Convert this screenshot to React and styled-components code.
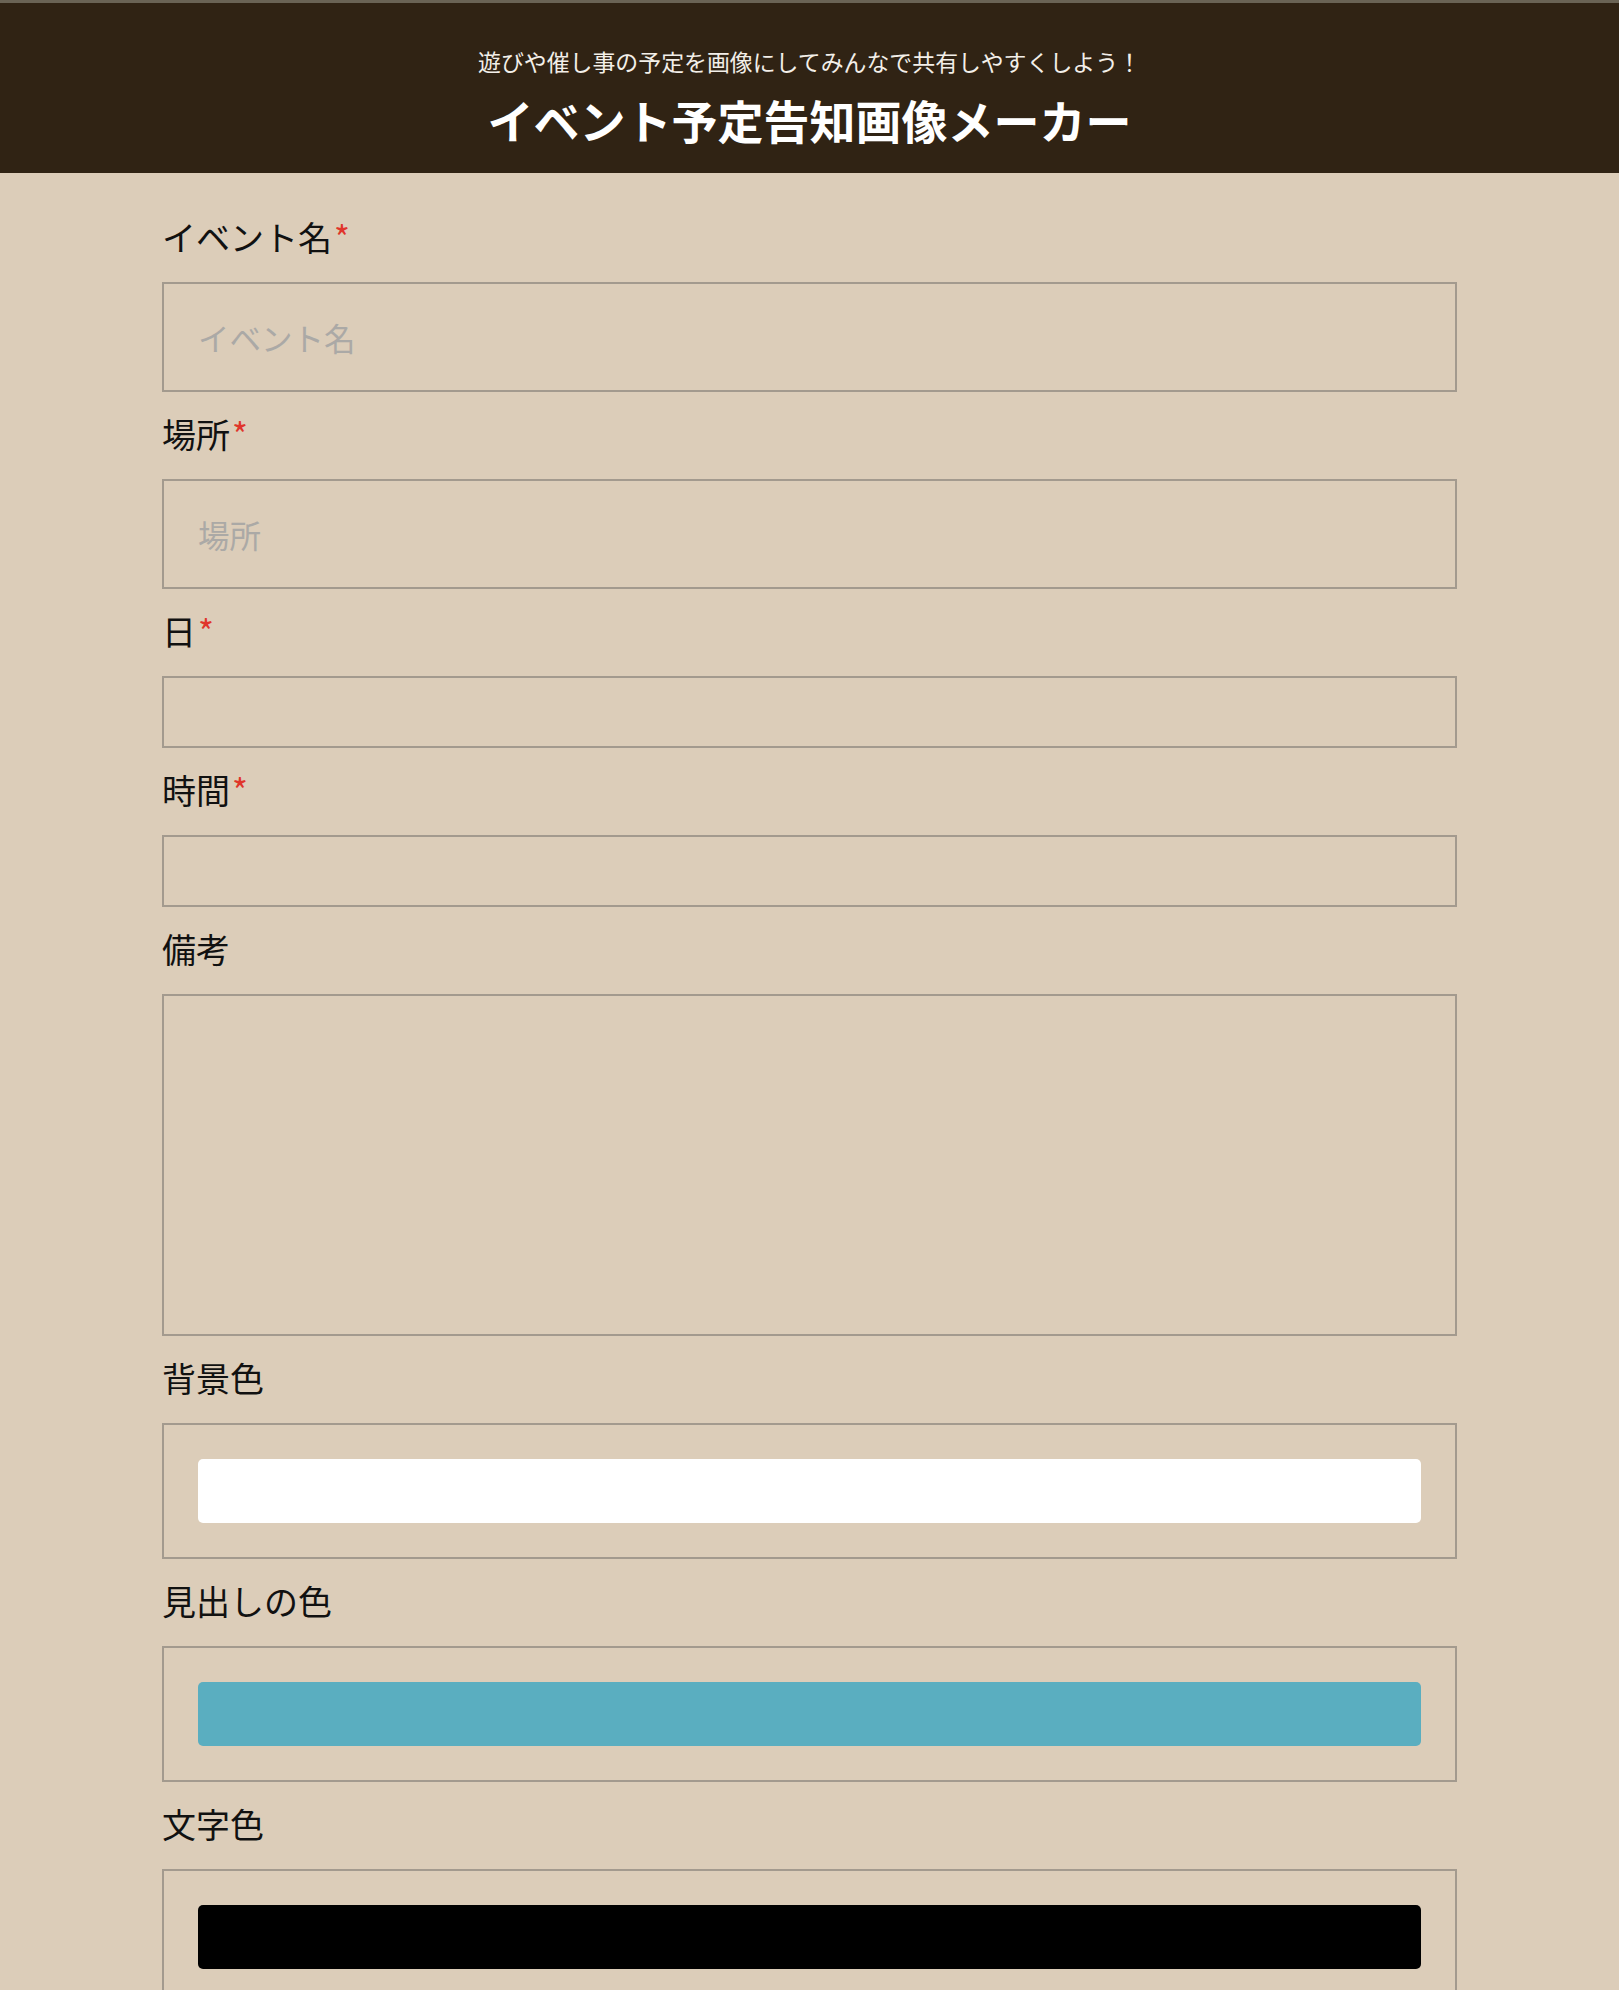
import styled, { createGlobalStyle } from "styled-components";

const GlobalStyle = createGlobalStyle`
  html, body {
    margin: 0;
    padding: 0;
    background: #dccdb9;
  }
  body {
    font-family: "Noto Sans CJK JP", "Noto Sans", sans-serif;
    color: #111;
  }
  * {
    box-sizing: border-box;
  }
`;

const Header = styled.header`
  border-top: 3px solid #6a6355;
  background: #302314;
  color: #fff;
  padding: 41px 0 25px;
  display: flex;
  flex-direction: column;
  align-items: center;
  gap: 12px;
`;

const Lead = styled.p`
  margin: 0;
  font-size: 22.9px;
  line-height: 34px;
  color: #f3efe9;
`;

const Title = styled.h1`
  margin: 0;
  font-size: 46px;
  line-height: 58px;
  font-weight: 700;
`;

const Form = styled.form`
  width: 80%;
  margin: 0 auto;
  padding: 38.5px 0 80px;
  display: flex;
  flex-direction: column;
  gap: 16.5px;
`;

const Field = styled.div`
  display: flex;
  flex-direction: column;
  gap: 21px;
`;

const Label = styled.label`
  display: block;
  font-size: 34px;
  line-height: 49.5px;
  color: #111;
`;

const Req = styled.span`
  color: #e0352b;
  margin-left: 2px;
`;

const TextInput = styled.input`
  display: block;
  width: 100%;
  height: ${(p) => p.$h}px;
  padding: 0 34px;
  border: 2px solid #a39a8e;
  border-radius: 0;
  background: transparent;
  font: inherit;
  font-size: 31.5px;
  color: #111;
  outline: none;

  &::placeholder {
    color: #aba9a6;
  }
`;

const TextArea = styled.textarea`
  display: block;
  width: 100%;
  height: 342px;
  padding: 20px 34px;
  border: 2px solid #a39a8e;
  border-radius: 0;
  background: transparent;
  font: inherit;
  font-size: 31.5px;
  resize: none;
  outline: none;
`;

const ColorWell = styled.div`
  border: 2px solid #a39a8e;
  padding: 34px;
`;

const ColorInput = styled.input`
  display: block;
  width: 100%;
  height: 64px;
  padding: 0;
  margin: 0;
  border: none;
  background: none;
  cursor: pointer;
  -webkit-appearance: none;
  appearance: none;

  &::-webkit-color-swatch-wrapper {
    padding: 0;
  }
  &::-webkit-color-swatch {
    border: none;
    border-radius: 5px;
  }
`;

const colors = [
  { id: "bg", label: "背景色", value: "#ffffff" },
  { id: "heading", label: "見出しの色", value: "#5aaec0" },
  { id: "text", label: "文字色", value: "#000000" },
];

export default function App() {
  return (
    <>
      <GlobalStyle />
      <Header>
        <Lead>遊びや催し事の予定を画像にしてみんなで共有しやすくしよう！</Lead>
        <Title>イベント予定告知画像メーカー</Title>
      </Header>
      <Form onSubmit={(e) => e.preventDefault()}>
        <Field>
          <Label htmlFor="name">
            イベント名<Req>*</Req>
          </Label>
          <TextInput id="name" $h={110} placeholder="イベント名" />
        </Field>
        <Field>
          <Label htmlFor="place">
            場所<Req>*</Req>
          </Label>
          <TextInput id="place" $h={110} placeholder="場所" />
        </Field>
        <Field>
          <Label htmlFor="date">
            日<Req>*</Req>
          </Label>
          <TextInput id="date" $h={72} />
        </Field>
        <Field>
          <Label htmlFor="time">
            時間<Req>*</Req>
          </Label>
          <TextInput id="time" $h={72} />
        </Field>
        <Field>
          <Label htmlFor="note">備考</Label>
          <TextArea id="note" />
        </Field>
        {colors.map((c) => (
          <Field key={c.id}>
            <Label htmlFor={c.id}>{c.label}</Label>
            <ColorWell>
              <ColorInput id={c.id} type="color" defaultValue={c.value} />
            </ColorWell>
          </Field>
        ))}
      </Form>
    </>
  );
}
